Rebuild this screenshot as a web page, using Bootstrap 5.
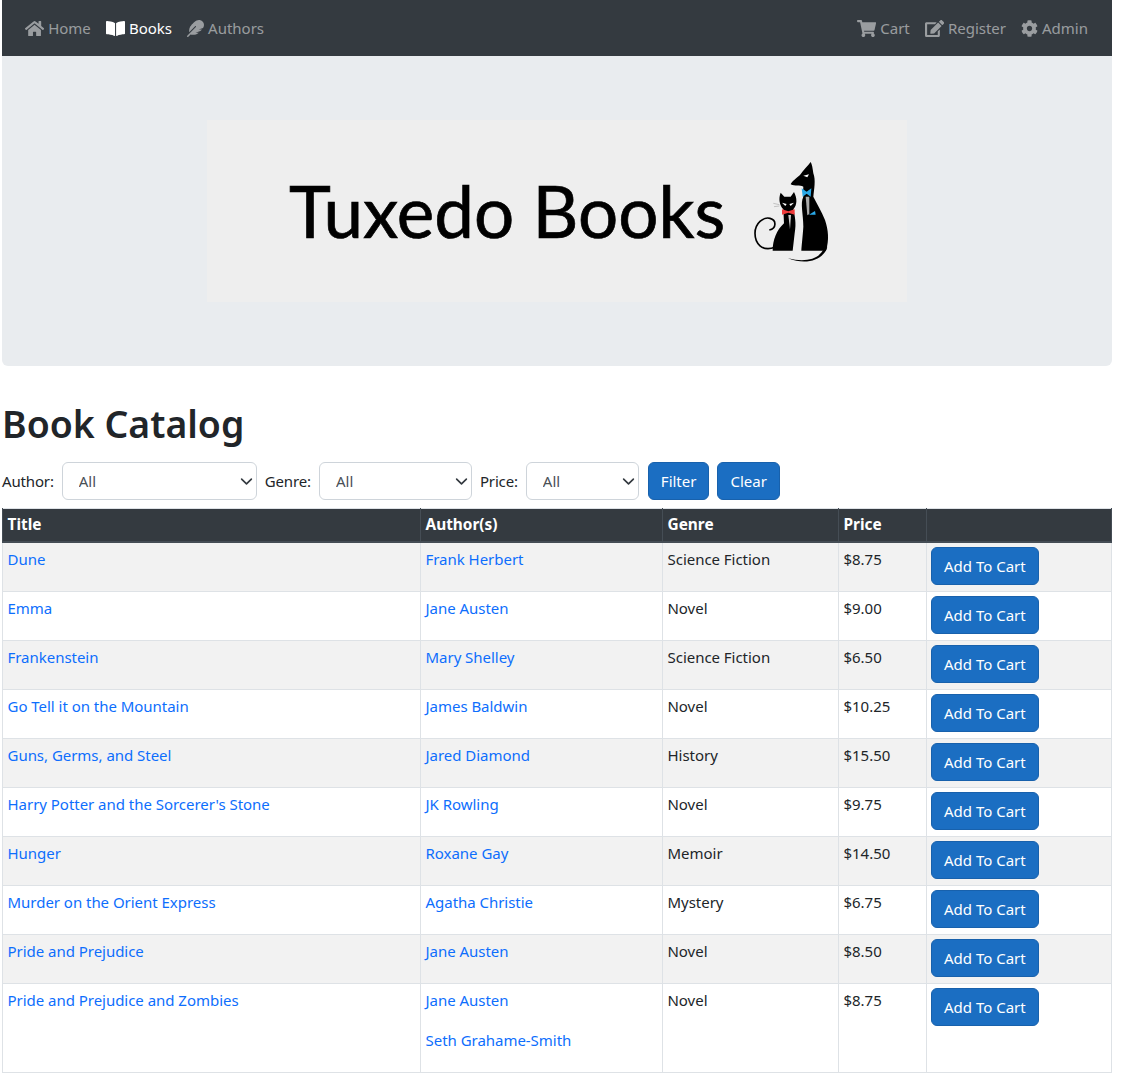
<!DOCTYPE html>
<html lang="en">
<head>
	<meta charset="UTF-8" />
	<meta name="viewport" content="width=device-width, initial-scale=1.0"/>
	<title>Tuxedo Books</title>

	<link href="https://cdn.jsdelivr.net/npm/bootstrap@5.3.0/dist/css/bootstrap.min.css" rel="stylesheet" />
	<style>
		body { font-family: "Noto Sans", "Liberation Sans", sans-serif; font-size: 15px; line-height: 24px; color: #212529; }
		.page-wrap { margin: 0 17px 0 2px; }
		.shop-nav { background: #343a40; height: 56px; padding: 0 16px; }
		.shop-nav .nav-link { color: rgba(255,255,255,.5); padding: 8px; font-size: 15px; display: flex; align-items: center; gap: 4px; }
		.shop-nav .nav-link.active { color: #fff; }
		.shop-nav svg { height: 17px; margin-left: -1px; fill: currentColor; }
		.hero { background: #e9ecef; height: 310px; padding-top: 64px; border-radius: 0 0 6px 6px; margin-bottom: 32px; }
		.logo-box { background: #eee; width: 700px; height: 182px; margin: 0 auto; padding-left: 82px; position: relative; }
		.logo-text { font-family: "Lato", sans-serif; font-size: 71px; line-height: 182px; color: #000; -webkit-text-stroke: .7px #000; }
		.logo-cats { position: absolute; left: 513px; top: 20px; width: 130px; height: 140px; }
		h1.catalog-title { font-family: "Noto Sans", sans-serif; font-size: 37.4px; font-weight: 600; line-height: 48px; margin: 0 0 16px; padding-top: 2px; height: 48px; }
		.filter-row { margin-bottom: 8px; height: 38px; }
		.filter-row label { letter-spacing: -.15px; }
		.filter-row .form-select { color: #495057; padding-left: 16px; border-color: #ced4da; font-size: 15px; height: 38px; background-size: 13px; background-position: right 3px center; }
		.sel-author { width: 195px; }
		.sel-genre { width: 153px; }
		.sel-price { width: 113px; }
		.sel-price + .btn-shop { margin-left: 1px; }
		.btn-shop { background: #1b6ec2; border-color: #1861ac; color: #fff; font-size: 15px; height: 38px; line-height: 24px; }
		.btn-shop:hover { background: #1861ac; color: #fff; }
		.book-table { table-layout: fixed; width: 1109px; margin-bottom: 0; }
		.book-table a { text-decoration: none; color: #0d6efd; }
		.book-table thead th { --bs-table-bg: #343a40; --bs-table-color: #fff; color: #fff; background-color: #343a40; border-color: #454d55; border-bottom-width: 2px; font-size: 15.4px; padding-left: 4.5px; }
		.book-table tbody td:not(:last-child) { padding-left: 4.5px; letter-spacing: -.03px; }
		.book-table p { margin-bottom: 16px; }
		.col-title { width: 418px; }
		.col-author { width: 242px; }
		.col-genre { width: 176px; }
		.col-price { width: 88px; }
		.col-buy { width: 185px; }
	</style>
	<script src="https://cdn.jsdelivr.net/npm/bootstrap@5.3.0/dist/js/bootstrap.bundle.min.js"></script>
</head>

<body>
	<div class="page-wrap">
		<nav class="shop-nav d-flex align-items-center justify-content-between">
			<ul class="nav">
				<li class="nav-item"><a class="nav-link" href="#"><svg viewBox="0 0 576 512"><path d="M280.37 148.26L96 300.11V464a16 16 0 0 0 16 16l112.06-.29a16 16 0 0 0 15.92-16V368a16 16 0 0 1 16-16h64a16 16 0 0 1 16 16v95.64a16 16 0 0 0 16 16.05L464 480a16 16 0 0 0 16-16V300L295.67 148.26a12.19 12.19 0 0 0-15.3 0zM571.6 251.47L488 182.56V44.05a12 12 0 0 0-12-12h-56a12 12 0 0 0-12 12v72.61L318.47 43a48 48 0 0 0-61 0L4.34 251.47a12 12 0 0 0-1.6 16.9l25.5 31A12 12 0 0 0 45.15 301l235.22-193.74a12.19 12.19 0 0 1 15.3 0L530.9 301a12 12 0 0 0 16.9-1.6l25.5-31a12 12 0 0 0-1.7-16.93z"/></svg>Home</a></li>
				<li class="nav-item"><a class="nav-link active" href="#"><svg viewBox="0 0 576 512"><path d="M542.22 32.05c-54.8 3.11-163.72 14.43-230.96 55.59-4.64 2.84-7.27 7.89-7.27 13.17v363.87c0 11.55 12.63 18.85 23.28 13.49 69.18-34.82 169.23-44.32 218.7-46.92 16.89-.89 30.02-14.43 30.02-30.66V62.75c.01-17.71-15.35-31.74-33.77-30.7zM264.73 87.64C197.5 46.48 88.58 35.17 33.78 32.05 15.36 31.01 0 45.04 0 62.75V400.6c0 16.24 13.13 29.78 30.02 30.66 49.49 2.6 149.59 12.11 218.77 46.95 10.62 5.35 23.21-1.94 23.21-13.46V100.63c0-5.29-2.62-10.14-7.27-12.99z"/></svg>Books</a></li>
				<li class="nav-item"><a class="nav-link" href="#"><svg viewBox="0 0 512 512"><path d="M467.14 44.84c-62.55-62.48-161.67-64.78-252.28 25.73-78.61 78.52-60.98 60.92-85.75 85.66-60.46 60.39-70.39 150.83-63.64 211.17l178.44-178.25c6.26-6.25 16.4-6.25 22.65 0s6.25 16.38 0 22.63L7.04 471.03c-9.38 9.37-9.38 24.57 0 33.94 9.38 9.37 24.6 9.37 33.98 0l66.1-66.03C159.42 454.65 279 457.11 353.95 384h-98.19l147.57-49.14c49.99-49.93 36.38-36.18 46.31-46.86h-97.78l131.54-43.8c45.44-74.46 34.31-148.84-16.26-199.36z"/></svg>Authors</a></li>
			</ul>
			<ul class="nav">
				<li class="nav-item"><a class="nav-link" href="#"><svg viewBox="0 0 576 512"><path d="M528.12 301.319l47.273-208C578.806 78.301 567.391 64 551.99 64H159.208l-9.166-44.81C147.758 8.021 137.93 0 126.529 0H24C10.745 0 0 10.745 0 24v16c0 13.255 10.745 24 24 24h69.883l70.248 343.435C147.325 417.1 136 435.222 136 456c0 30.928 25.072 56 56 56s56-25.072 56-56c0-15.674-6.447-29.835-16.824-40h209.647C430.447 426.165 424 440.326 424 456c0 30.928 25.072 56 56 56s56-25.072 56-56c0-22.172-12.888-41.332-31.579-50.405l5.517-24.276c3.413-15.018-8.002-29.319-23.403-29.319H218.117l-6.545-32h293.145c11.206 0 20.92-7.754 23.403-18.681z"/></svg>Cart</a></li>
				<li class="nav-item"><a class="nav-link" href="#"><svg viewBox="0 0 576 512"><path d="M402.6 83.2l90.2 90.2c3.8 3.8 3.8 10 0 13.8L274.4 405.6l-92.8 10.3c-12.4 1.4-22.9-9.1-21.5-21.5l10.3-92.8L388.8 83.2c3.8-3.8 10-3.8 13.8 0zm162-22.9l-48.8-48.8c-15.2-15.2-39.9-15.2-55.2 0l-35.4 35.4c-3.8 3.8-3.8 10 0 13.8l90.2 90.2c3.8 3.8 10 3.8 13.8 0l35.4-35.4c15.2-15.3 15.2-40 0-55.2zM384 346.2V448H64V128h229.8c3.2 0 6.2-1.3 8.5-3.5l40-40c7.6-7.6 2.2-20.5-8.5-20.5H48C21.5 64 0 85.5 0 112v352c0 26.5 21.5 48 48 48h352c26.5 0 48-21.5 48-48V306.2c0-10.7-12.9-16-20.5-8.5l-40 40c-2.2 2.3-3.5 5.3-3.5 8.5z"/></svg>Register</a></li>
				<li class="nav-item"><a class="nav-link" href="#"><svg viewBox="0 0 512 512"><path d="M487.4 315.7l-42.6-24.6c4.3-23.2 4.3-47 0-70.2l42.6-24.6c4.9-2.8 7.1-8.6 5.5-14-11.1-35.6-30-67.8-54.7-94.6-3.8-4.1-10-5.1-14.8-2.3L380.8 110c-17.9-15.4-38.5-27.3-60.8-35.1V25.8c0-5.6-3.9-10.5-9.4-11.7-36.7-8.2-74.3-7.8-109.2 0-5.5 1.2-9.4 6.1-9.4 11.7V75c-22.2 7.9-42.8 19.8-60.8 35.1L88.7 85.5c-4.9-2.8-11-1.9-14.8 2.3-24.7 26.7-43.6 58.9-54.7 94.6-1.7 5.4.6 11.2 5.5 14L67.3 221c-4.3 23.2-4.3 47 0 70.2l-42.6 24.6c-4.9 2.8-7.1 8.6-5.5 14 11.1 35.6 30 67.8 54.7 94.6 3.8 4.1 10 5.1 14.8 2.3l42.6-24.6c17.9 15.4 38.5 27.3 60.8 35.1v49.2c0 5.6 3.9 10.5 9.4 11.7 36.7 8.2 74.3 7.8 109.2 0 5.5-1.2 9.4-6.1 9.4-11.7v-49.2c22.2-7.9 42.8-19.8 60.8-35.1l42.6 24.6c4.9 2.8 11 1.9 14.8-2.3 24.7-26.7 43.6-58.9 54.7-94.6 1.5-5.5-.7-11.3-5.6-14.1zM256 336c-44.1 0-80-35.9-80-80s35.9-80 80-80 80 35.9 80 80-35.9 80-80 80z"/></svg>Admin</a></li>
			</ul>
		</nav>

		<div class="hero">
			<div class="logo-box">
				<span class="logo-text">Tuxedo Books</span>
				<!-- cats, coordinates are 3x page px -->
				<svg class="logo-cats" viewBox="0 0 390 420">
					<path d="M272 66C262 80 250 90 240 105C228 115 215 125 212 133C225 140 240 135 250 140C250 150 248 160 250 170C240 190 250 220 250 260C248 290 245 315 244 332L318 332C328 300 325 270 315 240C305 215 290 190 280 170C282 150 288 120 280 100C278 85 276 72 272 66Z"/>
					<path d="M322 320C312 358 262 378 204 355C256 368 298 358 312 325Z"/>
					<path d="M245 145L260 155L274 145L272 170L260 161L248 170Z" fill="#2aa9e8"/>
					<path d="M250 107L267 103L262 112Z" fill="#fff"/>
					<path d="M257 170L268 170L268 222L262 226Z" fill="#aaa"/>
					<path d="M267 224L285 213L287 224Z" fill="#2aa9e8"/>
					<path d="M182 158L193 170L212 170L222 156C232 175 232 195 220 208C224 225 230 250 224 280L218 332L158 332C158 300 170 270 192 250L190 208C178 195 175 175 182 158Z"/>
					<path d="M186 208L205 214L224 208L224 224L205 218L186 224Z" fill="#ee3b3b"/>
					<path d="M186 188L200 192L196 198ZM222 188L208 192L212 198Z" fill="#fff"/>
					<path d="M205 225L213 225L210 268Z" fill="#ccc"/>
					<path d="M165 322C125 336 105 310 105 280C105 250 130 230 150 235C170 240 170 265 148 270" fill="none" stroke="#000" stroke-width="5"/>
					<path d="M160 190L178 194M162 200L178 198" stroke="#aaa" stroke-width="2"/>
				</svg>
			</div>
		</div>

		<h1 class="catalog-title">Book Catalog</h1>

		<form class="filter-row d-flex align-items-center gap-2">
			<label for="authorFilter">Author:</label>
			<select id="authorFilter" class="form-select sel-author"><option>All</option></select>
			<label for="genreFilter">Genre:</label>
			<select id="genreFilter" class="form-select sel-genre"><option>All</option></select>
			<label for="priceFilter">Price:</label>
			<select id="priceFilter" class="form-select sel-price"><option>All</option></select>
			<button type="button" class="btn btn-shop">Filter</button>
			<button type="button" class="btn btn-shop">Clear</button>
		</form>

		<table class="table table-sm table-bordered table-striped book-table">
			<colgroup>
				<col class="col-title"><col class="col-author"><col class="col-genre"><col class="col-price"><col class="col-buy">
			</colgroup>
			<thead>
				<tr><th>Title</th><th>Author(s)</th><th>Genre</th><th>Price</th><th></th></tr>
			</thead>
			<tbody id="bookRows"></tbody>
		</table>
	</div>

	<script>
		const books = [
			['Dune', ['Frank Herbert'], 'Science Fiction', '$8.75'],
			['Emma', ['Jane Austen'], 'Novel', '$9.00'],
			['Frankenstein', ['Mary Shelley'], 'Science Fiction', '$6.50'],
			['Go Tell it on the Mountain', ['James Baldwin'], 'Novel', '$10.25'],
			['Guns, Germs, and Steel', ['Jared Diamond'], 'History', '$15.50'],
			["Harry Potter and the Sorcerer's Stone", ['JK Rowling'], 'Novel', '$9.75'],
			['Hunger', ['Roxane Gay'], 'Memoir', '$14.50'],
			['Murder on the Orient Express', ['Agatha Christie'], 'Mystery', '$6.75'],
			['Pride and Prejudice', ['Jane Austen'], 'Novel', '$8.50'],
			['Pride and Prejudice and Zombies', ['Jane Austen', 'Seth Grahame-Smith'], 'Novel', '$8.75']
		];

		document.getElementById('bookRows').innerHTML = books.map(b => `
			<tr>
				<td><a href="#">${b[0]}</a></td>
				<td>${b[1].map(a => `<p><a href="#">${a}</a></p>`).join('')}</td>
				<td>${b[2]}</td>
				<td>${b[3]}</td>
				<td><button type="button" class="btn btn-shop">Add To Cart</button></td>
			</tr>`).join('');
	</script>
</body>
</html>
